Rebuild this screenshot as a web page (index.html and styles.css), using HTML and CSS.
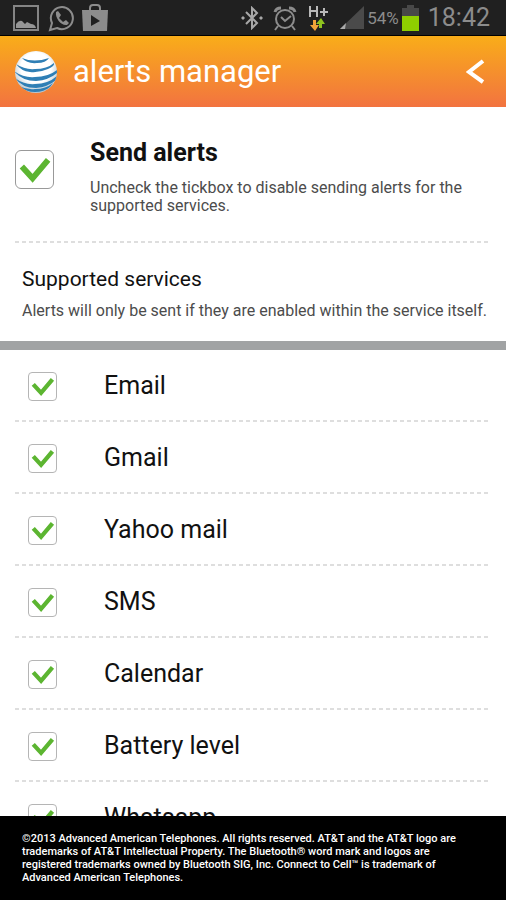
FILE: index.html
```html
<!DOCTYPE html>
<html lang="en">
<head>
<meta charset="utf-8">
<meta name="viewport" content="width=device-width, initial-scale=1">
<title>alerts manager</title>
<link rel="stylesheet" href="styles.css">
</head>
<body>
<div class="screen">
  <div class="status">
    <div class="notices">
      <svg width="27" height="28" viewBox="0 0 27 28"><rect x="1" y="2" width="24" height="24" fill="none" stroke="#858585" stroke-width="2"/><path d="M3 24v-4q3-4 6-3l3 3 2-2 4 2q4 0 5 4z" fill="#969696"/></svg>
      <svg width="26" height="28" viewBox="0 0 26 28"><path d="M2 26l2-7a11 11 0 1 1 5 5z" fill="none" stroke="#8c8c8c" stroke-width="2"/><path d="M8 8l2-1 3 4-2 3 4 4 3-2 3 3-2 2c-6 1-12-7-11-13z" fill="#8c8c8c"/></svg>
      <svg width="27" height="28" viewBox="0 0 27 28"><path d="M8 6V4q0-3 3-3h4q3 0 3 3v2" fill="none" stroke="#8c8c8c" stroke-width="2"/><path d="M0 6h26l-1 21H1z" fill="#8c8c8c"/><path d="M9 11v11l9-5z" fill="#202020"/></svg>
    </div>
    <div class="signals">
      <svg width="22" height="24" viewBox="0 0 22 24"><path d="M5 6l11 11-5 5V2l5 5L5 18" fill="none" stroke="#a8a8a8" stroke-width="2"/><path d="M0 12l2-2 2 2-2 2zM18 12l2-2 2 2-2 2z" fill="#a8a8a8"/></svg>
      <svg width="25" height="26" viewBox="0 0 25 26"><g fill="none" stroke="#8c8c8c" stroke-width="2"><circle cx="12" cy="14" r="9"/><path d="M8 12l4 4 6-5M5 21l-3 4M19 21l3 4"/><path d="M2 7q1-4 6-4M22 7q-1-4-6-4" stroke-width="3"/></g></svg>
      <svg width="22" height="26" viewBox="0 0 22 26"><path d="M2 1v11M9 1v11M2 6h7M12 7h8M16 3v8" fill="none" stroke="#b8b8b8" stroke-width="2"/><path d="M5 15h3v5h3l-4 6-5-6h3z" fill="#f2a33a"/><path d="M11 23h3v-4h3l-4-6-5 6h3z" fill="#8fc31f"/></svg>
      <svg width="24" height="24" viewBox="0 0 24 24"><path d="M0 23L24 0v23z" fill="#4a4a4a"/><path d="M0 23l6-6-1 6z" fill="#aaa"/></svg>
      <span class="percent">54%</span>
      <svg width="17" height="26" viewBox="0 0 17 26"><path d="M0 3h5V0h7v3h5v9H0z" fill="#484848"/><path d="M0 11h17v15H0z" fill="#8fcf00"/></svg>
      <span class="clock">18:42</span>
    </div>
  </div>
  <header class="bar">
    <svg class="globe" width="44" height="44" viewBox="0 0 44 44">
      <defs>
        <radialGradient id="ball" cx=".5" cy=".4" r=".6"><stop offset=".6" stop-color="#fff"/><stop offset="1" stop-color="#b3c3cd"/></radialGradient>
        <clipPath id="round"><circle cx="22" cy="22" r="21"/></clipPath>
      </defs>
      <circle cx="22" cy="22" r="21" fill="url(#ball)"/>
      <g clip-path="url(#round)" fill="#2f7fb5">
        <path d="M8 8q12 5 27 0-3 5-12 5Q13 14 8 8z"/>
        <path d="M2 14q9 6 19 5 12 0 19-6 1 3-6 6-9 4-18 3Q7 21 2 14z"/>
        <path d="M0 21q9 7 21 6 13 0 22-7v3q-8 7-21 8Q8 31 0 21z"/>
        <path d="M1 28q9 7 20 6 13 0 22-8l-1 4q-8 7-20 8Q8 38 1 28z"/>
        <path d="M5 36q8 4 16 3 11 0 18-6l-3 4q-6 5-15 5-9 0-16-6z"/>
      </g>
    </svg>
    <h1>alerts manager</h1>
    <button class="back" type="button" aria-label="Back"><svg width="22" height="28" viewBox="0 0 22 28"><path d="M17 3L3 14l14 10" fill="none" stroke="#fff" stroke-width="4"/></svg></button>
  </header>
  <main>
    <section class="master">
      <input class="tick big" type="checkbox" id="send" checked>
      <div class="copy">
        <label for="send">Send alerts</label>
        <p>Uncheck the tickbox to disable sending alerts for the supported services.</p>
      </div>
    </section>
    <div class="rule"></div>
    <section class="intro">
      <h2>Supported services</h2>
      <p>Alerts will only be sent if they are enabled within the service itself.</p>
    </section>
    <ul class="services">
      <li><input class="tick" type="checkbox" id="email" checked><label for="email">Email</label></li>
      <li><input class="tick" type="checkbox" id="gmail" checked><label for="gmail">Gmail</label></li>
      <li><input class="tick" type="checkbox" id="yahoo" checked><label for="yahoo">Yahoo mail</label></li>
      <li><input class="tick" type="checkbox" id="sms" checked><label for="sms">SMS</label></li>
      <li><input class="tick" type="checkbox" id="calendar" checked><label for="calendar">Calendar</label></li>
      <li><input class="tick" type="checkbox" id="battery" checked><label for="battery">Battery level</label></li>
      <li><input class="tick" type="checkbox" id="whatsapp" checked><label for="whatsapp">Whatsapp</label></li>
    </ul>
  </main>
  <footer>©2013 Advanced American Telephones. All rights reserved. AT&amp;T and the AT&amp;T logo are trademarks of AT&amp;T Intellectual Property. The Bluetooth® word mark and logos are registered trademarks owned by Bluetooth SIG, Inc. Connect to Cell™ is trademark of Advanced American Telephones.</footer>
</div>
</body>
</html>
```
FILE: styles.css
```css
* { box-sizing: border-box; }
body, h1, h2, p, ul { margin: 0; padding: 0; }
body { font-family: Roboto, "Liberation Sans", sans-serif; color: #111; background: #fff; }
.screen { height: 100vh; display: flex; flex-direction: column; }
.status { display: flex; justify-content: space-between; align-items: center; height: 36px; padding: 0 16px 0 13px; background: #202020; color: #8c8c8c; border-bottom: 1px solid #000; }
.notices, .signals { display: flex; align-items: center; gap: 8px; }
.signals { gap: 10px; }
.signals svg, .notices svg { flex: none; }
.percent { font-size: 17px; margin: 0 -7px; }
.clock { font-size: 25px; margin-left: -1px; }
.bar { display: flex; align-items: center; height: 71px; padding: 0 18px 0 14px; background: linear-gradient(#f9ad19, #f27340); color: #fff; flex: none; }
.bar h1 { flex: 1; margin-left: 15px; font-size: 31px; font-weight: 400; line-height: 36px; }
.back { display: flex; padding: 0; border: 0; background: none; }
main { flex: 1; min-height: 0; overflow: hidden; }
.master { display: flex; align-items: flex-start; gap: 36px; height: 134px; padding: 28px 15px 0; }
.copy { flex: 1; }
.copy label { display: block; font-size: 25px; font-weight: 700; line-height: 36px; }
.copy p { margin-top: 8px; }
p { color: #4c4c4c; font-size: 16px; line-height: 18px; }
.rule, .services li { background: repeating-linear-gradient(90deg, #dedede 0 4px, transparent 4px 7px) 15px 100% / calc(100% - 30px) 2px no-repeat; }
.rule { height: 2px; }
.intro { height: 107px; padding: 20px 20px 0 22px; border-bottom: 9px solid #a1a3a4; }
h2 { font-size: 21px; font-weight: 400; line-height: 32px; }
.intro p { margin-top: 7px; white-space: nowrap; }
.services { list-style: none; }
.services li { display: flex; align-items: center; height: 72px; padding-left: 28px; gap: 47px; }
.services label { font-size: 25px; line-height: 32px; }
.tick { appearance: none; flex: none; width: 29px; height: 29px; margin: 0; border: 1px solid #b5b5b5; border-radius: 4px; background: #fff url("data:image/svg+xml,%3Csvg xmlns='http://www.w3.org/2000/svg' viewBox='0 0 38 38'%3E%3Cpath d='M6 16l11 12L33 9' fill='none' stroke='%235cb531' stroke-width='6'/%3E%3C/svg%3E") center / contain; }
.tick.big { width: 39px; height: 39px; margin-top: 15px; border-color: #999; border-radius: 6px; }
footer { flex: none; min-height: 84px; padding: 16px 30px 15px 22px; background: #000; color: #fff; font-size: 11px; font-weight: 500; line-height: 13px; }
```
